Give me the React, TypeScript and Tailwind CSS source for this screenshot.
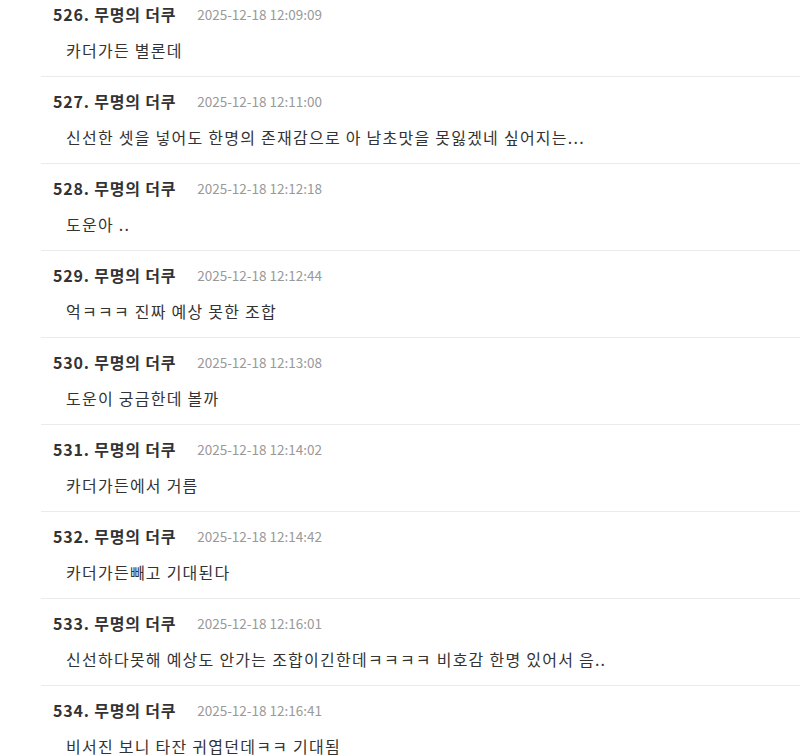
const comments = [
  { no: 526, date: '2025-12-18 12:09:09', text: '카더가든 별론데' },
  { no: 527, date: '2025-12-18 12:11:00', text: '신선한 셋을 넣어도 한명의 존재감으로 아 남초맛을 못잃겠네 싶어지는...' },
  { no: 528, date: '2025-12-18 12:12:18', text: '도운아 ..' },
  { no: 529, date: '2025-12-18 12:12:44', text: '억ㅋㅋㅋ 진짜 예상 못한 조합' },
  { no: 530, date: '2025-12-18 12:13:08', text: '도운이 궁금한데 볼까' },
  { no: 531, date: '2025-12-18 12:14:02', text: '카더가든에서 거름' },
  { no: 532, date: '2025-12-18 12:14:42', text: '카더가든빼고 기대된다' },
  { no: 533, date: '2025-12-18 12:16:01', text: '신선하다못해 예상도 안가는 조합이긴한데ㅋㅋㅋㅋ 비호감 한명 있어서 음..' },
  { no: 534, date: '2025-12-18 12:16:41', text: '비서진 보니 타잔 귀엽던데ㅋㅋ 기대됨' },
]

export default function App() {
  return (
    <div className="h-[756px] overflow-hidden bg-white font-['Noto_Sans_CJK_KR','Noto_Sans',sans-serif]">
      <ul className="-mt-[10px] ml-[41px]">
        {comments.map((c) => (
          <li key={c.no} className="border-b border-[#ebebeb] pt-[13px] pb-[15px]">
            <div className="flex items-center pl-[12px] leading-[22px]">
              <span className="text-[16px] font-bold tracking-[0.8px] text-[#333]">{c.no}. 무명의 더쿠</span>
              <span className="ml-[21px] text-[13.5px] text-[#999]">{c.date}</span>
            </div>
            <p className="mt-[14px] pl-[25px] text-[16px] leading-[22px] tracking-[1.25px] text-[#333]">{c.text}</p>
          </li>
        ))}
      </ul>
    </div>
  )
}
